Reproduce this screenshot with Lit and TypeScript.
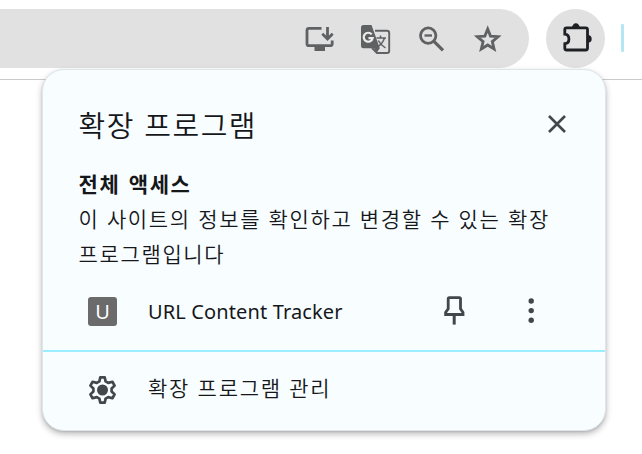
import { LitElement, html, css } from "lit";
import { customElement } from "lit/decorators.js";

@customElement("app-root")
export class AppRoot extends LitElement {
  static styles = css`
    :host {
      display: block;
      position: relative;
      width: 642px;
      height: 454px;
      overflow: hidden;
      background: #fff;
      color: #15171a;
      font-family: "Noto Sans CJK KR", sans-serif;
    }
    svg { display: block; flex: none; fill: none; }
    .toolbar {
      display: flex;
      box-sizing: border-box;
      height: 80px;
      padding-top: 9px;
      border-bottom: 1px solid #c8cacb;
    }
    .address {
      display: flex;
      justify-content: flex-end;
      align-items: center;
      gap: 16px;
      box-sizing: border-box;
      width: 529px;
      height: 59px;
      padding-right: 21px;
      border-radius: 0 29.5px 29.5px 0;
      background: #e1e1e1;
    }
    .extensions {
      display: grid;
      place-items: center;
      width: 59px;
      height: 59px;
      margin-left: 17px;
      border-radius: 50%;
      background: #e1e1e1;
    }
    .divider {
      width: 3px;
      height: 28px;
      margin: 15px 0 0 16px;
      border-radius: 1px;
      background: #b5e7f3;
    }
    .popup {
      position: absolute;
      left: 42px;
      top: 69px;
      width: 562px;
      height: 360px;
      border: 1px solid #dfe6e9;
      border-radius: 22px;
      background: #f8fdff;
      box-shadow: 0 3px 6px rgba(0, 0, 0, 0.28), 0 1px 2px rgba(0, 0, 0, 0.1);
    }
    .header {
      display: flex;
      justify-content: space-between;
      align-items: center;
      height: 34px;
      padding: 37px 36.5px 0 35.5px;
    }
    h1 {
      margin: 0;
      font-size: 29px;
      font-weight: 350;
      line-height: 34px;
      letter-spacing: 1.5px;
      word-spacing: 1.5px;
      white-space: nowrap;
    }
    .access { padding: 25px 0 1px 35.5px; }
    h2 {
      margin: 0;
      font-size: 21px;
      font-weight: 700;
      line-height: 35px;
      letter-spacing: 1.6px;
      word-spacing: 2px;
    }
    p {
      margin: 0;
      font-size: 21px;
      font-weight: 350;
      line-height: 35px;
      letter-spacing: 1.65px;
      word-spacing: 1.1px;
      white-space: nowrap;
    }
    .row {
      display: grid;
      grid-template-columns: 30px 1fr;
      align-items: center;
      height: 76px;
      padding: 0 59px 0 45px;
    }
    .row.extension {
      grid-template-columns: 30px 1fr 77px 30px;
      height: 78px;
    }
    .label { padding-left: 30px; white-space: nowrap; }
    .name {
      font-family: "Noto Sans", "Noto Sans CJK KR", sans-serif;
      font-size: 20px;
      letter-spacing: 0.13px;
    }
    .manage { height: 75px; border-top: 2px solid #9beeff; }
    .manage .label {
      font-size: 21px;
      font-weight: 350;
      line-height: 30px;
      letter-spacing: 1.7px;
      word-spacing: 1.2px;
      margin-top: -5px;
    }
    .badge {
      display: grid;
      place-items: center;
      width: 29px;
      height: 29px;
      border-radius: 3px;
      background: #6b6b6b;
      color: #fff;
      font: 20px/29px "Noto Sans", sans-serif;
    }
  `;

  render() {
    return html`
      <div class="toolbar">
        <div class="address">
          <svg width="40" height="40" viewBox="300 19 40 40" stroke="#606163" stroke-width="2.8">
            <path d="M321.5 28.4H309Q307 28.4 307 30.4V43.7Q307 45.7 309 45.7H330Q332.2 45.7 332.2 43.7V40.5" />
            <path d="M314.5 49H325" stroke-width="4" />
            <path d="M327.5 27V39M322.3 33.8L327.5 39L332.7 33.8" />
          </svg>
          <svg width="40" height="40" viewBox="356 19 40 40">
            <path d="M375 30.8H387Q389.2 30.8 389.2 33V51Q389.2 53 387 53H377L372 48" stroke="#606163" stroke-width="1.9" />
            <path d="M363.5 25H371.5L379.8 48.2L376.5 53L374 48.2H363.5Q361 48.2 361 46V27.5Q361 25 363.5 25Z" fill="#606163" />
            <path d="M371.7 34.4A4.5 4.5 0 1 0 372.6 38.2H368.5" stroke="#eee" stroke-width="2.2" />
            <path d="M376.5 38H386M380.5 35.5V38M384.3 38.5C383.2 42 380.5 45 376.8 47.5M378.3 40.5C380 44 382.5 46 385.5 48" stroke="#606163" stroke-width="1.5" />
          </svg>
          <svg width="40" height="40" viewBox="412 19 40 40" stroke="#606163" stroke-width="2.8">
            <circle cx="428.2" cy="35.6" r="7.7" />
            <path d="M433.7 41.1L443 50.4" stroke-width="3.2" />
            <path d="M424.5 35.5H432" stroke-width="2.3" />
          </svg>
          <svg width="40" height="40" viewBox="468 19 40 40">
            <path d="M487.7 29L490.5 36.1L498.1 36.7L492.3 41.6L494.1 49L487.7 45L481.3 49L483.1 41.6L477.3 36.7L484.9 36.1Z" stroke="#606163" stroke-width="2.8" />
          </svg>
        </div>
        <div class="extensions">
          <svg width="40" height="40" viewBox="555.5 18.5 40 40">
            <path d="M566 27.4H585.3Q587 27.4 587 29.1V47.8Q587 49.5 585.3 49.5H566Q564.3 49.5 564.3 47.8V43.2C569.8 42.8 569.8 34.1 564.3 33.6V29.1Q564.3 27.4 566 27.4Z" stroke="#1e2024" stroke-width="2.8" />
            <path d="M571.5 27.4A3.9 4.6 0 0 1 579.3 27.4ZM587 34.6A4.2 3.8 0 0 1 587 42.2Z" fill="#1e2024" />
          </svg>
        </div>
        <div class="divider"></div>
      </div>
      <section class="popup">
        <div class="header">
          <h1>확장 프로그램</h1>
          <svg width="24" height="24" viewBox="0 0 24 24" stroke="#42474b" stroke-width="2.6">
            <path d="M4 4L20 20M20 4L4 20" />
          </svg>
        </div>
        <div class="access">
          <h2>전체 액세스</h2>
          <p>이 사이트의 정보를 확인하고 변경할 수 있는 확장<br />프로그램입니다</p>
        </div>
        <div class="row extension">
          <span class="badge">U</span>
          <span class="label name">URL Content Tracker</span>
          <svg width="30" height="34" viewBox="439 295 30 34" stroke="#42474b" stroke-width="2.8">
            <path d="M449.3 298.7H459.3Q460.5 298.7 460.5 299.9V309.8L463 313.5V315.5H445.6V313.5L448.2 309.8V299.9Q448.2 298.7 449.3 298.7Z" />
            <path d="M454.2 315V325.6" stroke-width="3" />
          </svg>
          <svg width="30" height="34" viewBox="516 295 30 34">
            <g fill="#42474b">
              <circle cx="531.2" cy="302" r="2.7" />
              <circle cx="531.2" cy="311.6" r="2.7" />
              <circle cx="531.2" cy="321.2" r="2.7" />
            </g>
          </svg>
        </div>
        <div class="row manage">
          <svg width="30" height="30" viewBox="0 0 30 30">
            <path d="M12.3 2.3H16.7L17.6 6.4L20.2 7.9L24.4 6.8L26.6 10.6L23.6 13.5V16.5L26.6 19.4L24.4 23.2L20.2 22.1L17.6 23.6L16.7 27.7H12.3L11.4 23.6L8.8 22.1L4.6 23.2L2.4 19.4L5.4 16.5V13.5L2.4 10.6L4.6 6.8L8.8 7.9L11.4 6.4Z" stroke="#42474b" stroke-width="2.7" stroke-linejoin="round" />
            <circle cx="14.5" cy="15" r="5.5" fill="#42474b" />
          </svg>
          <span class="label">확장 프로그램 관리</span>
        </div>
      </section>
    `;
  }
}
